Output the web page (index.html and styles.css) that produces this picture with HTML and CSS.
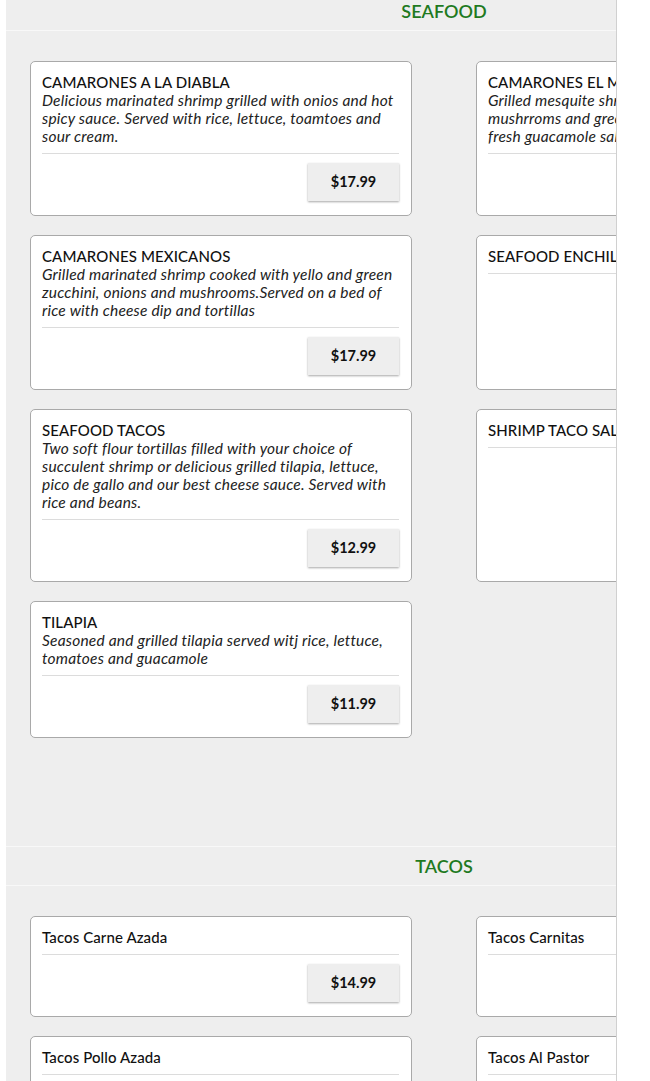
FILE: index.html
```html
<!DOCTYPE html>
<html>
<head>
<meta charset="utf-8">
<link rel="stylesheet" href="styles.css">
</head>
<body>
<div class="frame">
  <div class="menu">
    <section class="section first">
      <h2 class="sec-title">SEAFOOD</h2>
      <div class="grid">
        <div class="card">
          <div class="name">CAMARONES A LA DIABLA</div>
          <div class="desc">Delicious marinated shrimp grilled with onios and hot spicy sauce. Served with rice, lettuce, toamtoes and sour cream.</div>
          <div class="foot"><span class="price">$17.99</span></div>
        </div>
        <div class="card">
          <div class="name">CAMARONES EL MAÑANITO</div>
          <div class="desc">Grilled mesquite shrimp with onions, tomatoes, mushrroms and green peppers. Served with tortillas, fresh guacamole salad and rice.</div>
          <div class="foot"><span class="price">$17.99</span></div>
        </div>
        <div class="card">
          <div class="name">CAMARONES MEXICANOS</div>
          <div class="desc">Grilled marinated shrimp cooked with yello and green zucchini, onions and mushrooms.Served on a bed of rice with cheese dip and tortillas</div>
          <div class="foot"><span class="price">$17.99</span></div>
        </div>
        <div class="card">
          <div class="name">SEAFOOD ENCHILADAS</div>
          <div class="foot"><span class="price">$14.99</span></div>
        </div>
        <div class="card">
          <div class="name">SEAFOOD TACOS</div>
          <div class="desc">Two soft flour tortillas filled with your choice of succulent shrimp or delicious grilled tilapia, lettuce, pico de gallo and our best cheese sauce. Served with rice and beans.</div>
          <div class="foot"><span class="price">$12.99</span></div>
        </div>
        <div class="card">
          <div class="name">SHRIMP TACO SALAD</div>
          <div class="foot"><span class="price">$12.99</span></div>
        </div>
        <div class="card">
          <div class="name">TILAPIA</div>
          <div class="desc">Seasoned and grilled tilapia served witj rice, lettuce, tomatoes and guacamole</div>
          <div class="foot"><span class="price">$11.99</span></div>
        </div>
      </div>
    </section>
    <section class="section">
      <h2 class="sec-title">TACOS</h2>
      <div class="grid">
        <div class="card">
          <div class="name">Tacos Carne Azada</div>
          <div class="foot"><span class="price">$14.99</span></div>
        </div>
        <div class="card">
          <div class="name">Tacos Carnitas</div>
          <div class="foot"><span class="price">$14.99</span></div>
        </div>
        <div class="card">
          <div class="name">Tacos Pollo Azada</div>
          <div class="foot"><span class="price">$14.99</span></div>
        </div>
        <div class="card">
          <div class="name">Tacos Al Pastor</div>
          <div class="foot"><span class="price">$14.99</span></div>
        </div>
      </div>
    </section>
  </div>
</div>
</body>
</html>
```
FILE: styles.css
```css
html, body {
  margin: 0;
  padding: 0;
  background: #fff;
  height: 100%;
  overflow: hidden;
}
.frame {
  margin-left: 6px;
  width: 610px;
  height: 1081px;
  overflow: hidden;
  background: #eeeeee;
  border-right: 1px solid #d0d0d0;
  font-family: Lato, "Open Sans", sans-serif;
  color: #111;
}
.menu {
  width: 876px;
}
.section.first {
  margin-top: -9px;
}
.section {
  padding-bottom: 108px;
}
.sec-title {
  margin: 0;
  height: 38px;
  line-height: 38px;
  text-align: center;
  font-size: 18px;
  font-weight: 600;
  color: #1f7a1f;
  border-top: 1px solid #f8f8f8;
  border-bottom: 1px solid #f8f8f8;
}
.grid {
  display: grid;
  grid-template-columns: 382px 382px;
  column-gap: 64px;
  row-gap: 19px;
  padding: 30px 24px 0;
  align-items: stretch;
}
.card {
  background: #fff;
  border: 1px solid #a9a9a9;
  border-radius: 5px;
  padding: 11px 12px 14px 11px;
  display: flex;
  flex-direction: column;
}
.name {
  font-size: 15px;
  line-height: 18px;
  font-weight: 500;
  letter-spacing: 0.1px;
  color: #111;
}
.desc {
  font-size: 15.5px;
  line-height: 18px;
  font-style: italic;
  letter-spacing: 0.2px;
  color: #222;
}
.foot {
  margin-top: 8px;
  border-top: 1px solid #dcdcdc;
  padding-top: 9px;
  display: flex;
  justify-content: flex-end;
}
.price {
  width: 91px;
  height: 38px;
  line-height: 38px;
  text-align: center;
  background: #eeeeee;
  box-shadow: 0 1px 2px rgba(0,0,0,0.35);
  font-size: 14.5px;
  font-weight: 700;
  color: #111;
}
```
